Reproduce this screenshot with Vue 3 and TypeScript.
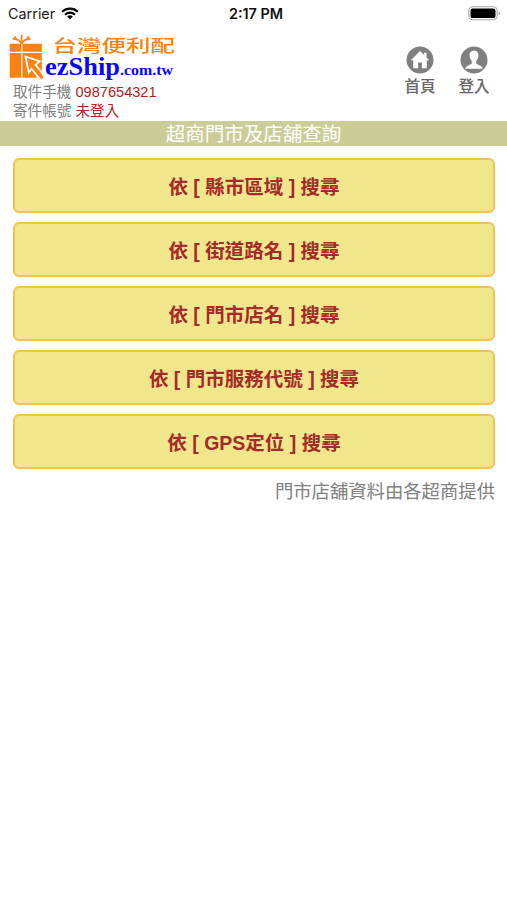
<script setup lang="ts">
interface SearchOption {
  id: string
  label: string
}

const phone = '0987654321'
const account = '未登入'
const options: SearchOption[] = [
  { id: 'area', label: '依 [ 縣市區域 ] 搜尋' },
  { id: 'road', label: '依 [ 街道路名 ] 搜尋' },
  { id: 'store', label: '依 [ 門市店名 ] 搜尋' },
  { id: 'code', label: '依 [ 門市服務代號 ] 搜尋' },
  { id: 'gps', label: '依 [ GPS定位 ] 搜尋' },
]
</script>

<template>
  <div class="screen">
    <div class="status">
      <div class="carrier">
        <span>Carrier</span>
        <svg class="wifi" width="18" height="13" viewBox="0 0 18 13">
          <g fill="none" stroke="#000" stroke-width="2.2">
            <path d="M1.2 4.7a11.2 11.2 0 0 1 15.6 0" />
            <path d="M4.1 7.7a7 7 0 0 1 9.8 0" />
          </g>
          <path d="M6.2 9.6a4 4 0 0 1 5.6 0L9 12.6z" />
        </svg>
      </div>
      <div class="time">2:17 PM</div>
      <svg class="battery" width="33" height="15" viewBox="0 0 33 15">
        <rect x="0.8" y="0.8" width="28.4" height="13" rx="4" fill="#fff" stroke="#a5a5a5" stroke-width="1.1" />
        <rect x="2.5" y="2.5" width="25" height="9.6" rx="2.2" />
        <path d="M30.6 5v4.6q1.5-.7 1.5-2.3T30.6 5z" fill="#a5a5a5" />
      </svg>
    </div>

    <header class="header">
      <div class="brand">
        <svg class="logo" width="170" height="48" viewBox="0 0 170 48">
          <path d="M.7 9.8h11.5v8H.7zM13.4 9.8h19.4v8H13.4zM.7 19h11.5v24.7H.7zM13.4 19h19.4v24.7H13.4z" fill="#fa8210" />
          <path d="M12.6 9.6C11 6.5 7.5 4.8 3.5 4.6M5.4 2.2l2.8 4.2M12.6 9.6C14.2 6.5 17.7 4.8 21.7 4.6M19.8 2.2L17 6.4M12.6 1v8.6" fill="none" stroke="#fa8210" stroke-width="1.7" />
          <path d="M27 45.5h7V38z" fill="#fff" />
          <path d="M16.5 22.5l14.2 4.9-4.1 3.5 7.6 9.8-4 3.7-7.7-9.7-2.8 3.8z" fill="#fa8210" stroke="#fff" stroke-width="1.8" />
          <path d="M27.6 35.5l5.7 8.8" stroke="#fa8210" stroke-width="3.2" />
          <text class="logo-cn" x="43.5" y="17.8" textLength="122.5" lengthAdjust="spacingAndGlyphs">台灣便利配</text>
          <text class="logo-en" x="36" y="41" textLength="75" lengthAdjust="spacingAndGlyphs">ezShip</text>
          <text class="logo-domain" x="111" y="41" textLength="53" lengthAdjust="spacingAndGlyphs">.com.tw</text>
        </svg>
        <div class="info">
          <div>取件手機 <span class="value">{{ phone }}</span></div>
          <div>寄件帳號 <span class="value">{{ account }}</span></div>
        </div>
      </div>
      <nav class="nav">
        <a class="nav-item">
          <svg width="28" height="28" viewBox="0 0 28 28">
            <circle cx="14" cy="14" r="13.5" fill="#808080" />
            <path d="M14 5L4.8 14.2h2.4v8.1h4.9v-5.8h3.8v5.8h4.9v-8.1h2.4L20.5 11.5V6.7h-2.4v2.4z" fill="#fff" />
          </svg>
          <span>首頁</span>
        </a>
        <a class="nav-item">
          <svg width="28" height="28" viewBox="0 0 28 28">
            <circle cx="14" cy="14" r="13.5" fill="#808080" />
            <path d="M14 4.7c-3 0-4.6 2.1-4.4 4.9.1 2.6 1.2 4.2 2.2 5.4v2.2c-.3 1.6-5.7 1.8-6.6 5.5h17.6c-.9-3.7-6.3-3.9-6.6-5.5V15c1-1.2 2.1-2.8 2.2-5.4.2-2.8-1.4-4.9-4.4-4.9z" fill="#fff" />
          </svg>
          <span>登入</span>
        </a>
      </nav>
    </header>

    <h1 class="title">超商門市及店舖查詢</h1>

    <main class="options">
      <button v-for="option in options" :key="option.id" class="option" type="button">{{ option.label }}</button>
    </main>
    <p class="note">門市店舖資料由各超商提供</p>
  </div>
</template>

<style>
body {
  margin: 0;
  background: #fff;
}
</style>

<style scoped>
.screen {
  width: 100%;
  height: 900px;
  overflow: hidden;
  background: #fff;
  font-family: "Liberation Sans", "Noto Sans CJK TC", sans-serif;
}
.status {
  height: 27px;
  display: grid;
  grid-template-columns: 1fr auto 1fr;
  align-items: center;
  padding: 0 6px 0 8px;
  font: 14.4px/27px Inter, sans-serif;
  color: #222;
}
.carrier {
  display: flex;
  align-items: center;
  gap: 6px;
}
.time {
  padding-left: 3px;
  font-weight: 600;
  color: #111;
}
.battery {
  justify-self: end;
}
.header {
  height: 94px;
  display: flex;
  justify-content: space-between;
}
.brand {
  padding: 7px 0 0 9px;
}
.logo {
  display: block;
  overflow: visible;
}
.logo-cn {
  font: 500 17px "Noto Sans CJK TC", sans-serif;
  fill: #fa8210;
}
.logo-en {
  font: bold 24.5px "Liberation Serif", serif;
  fill: #0808f0;
}
.logo-domain {
  font: bold 15px "Liberation Serif", serif;
  fill: #0808f0;
}
.info {
  padding: 1px 0 0 4px;
  font-size: 14.6px;
  line-height: 18.5px;
  color: #808080;
  white-space: nowrap;
}
.value {
  color: #b22222;
}
.nav {
  display: flex;
  gap: 22px;
  padding: 19px 17px 0 0;
}
.nav-item {
  width: 32px;
  display: flex;
  flex-direction: column;
  align-items: center;
  font-size: 15.6px;
  font-weight: 500;
  line-height: 24px;
  color: #666;
  white-space: nowrap;
}
.nav-item span {
  margin-top: 1px;
}
.title {
  margin: 0;
  height: 25px;
  background: #cccc99;
  color: #fff;
  font-size: 19.5px;
  font-weight: 400;
  line-height: 27px;
  text-align: center;
}
.options {
  display: flex;
  flex-direction: column;
  gap: 9px;
  padding: 12px 12px 0 13px;
}
.option {
  height: 55px;
  box-sizing: border-box;
  border: 2px solid #f8c050;
  border-radius: 6px;
  background: #f0e68c;
  color: #a52a2a;
  font: bold 19.5px "Liberation Sans", "Noto Sans CJK TC", sans-serif;
  text-align: center;
}
.note {
  margin: 9px 12px 0;
  font-size: 18.35px;
  line-height: 28px;
  text-align: right;
  color: #808080;
}
</style>
